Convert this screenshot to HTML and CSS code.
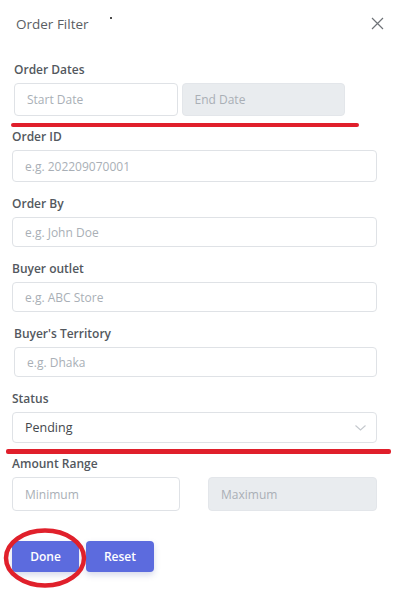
FILE: index.html
```html
<!DOCTYPE html>
<html lang="en">
<head>
<meta charset="utf-8">
<title>Order Filter</title>
<link rel="stylesheet" href="styles.css">
</head>
<body>
<div class="panel">
  <header class="head">
    <h1 class="title">Order Filter</h1>
    <span class="dot"></span>
    <button class="close" aria-label="Close">
      <svg width="13" height="13" viewBox="0 0 13 13"><path d="M1 1L12 12M12 1L1 12" stroke="#6f7378" stroke-width="1.2" fill="none"/></svg>
    </button>
  </header>

  <div class="field indent">
    <label class="label">Order Dates</label>
    <div class="pair pair-dates">
      <div class="input h33"><span class="ph">Start Date</span></div>
      <div class="input h33 disabled"><span class="ph">End Date</span></div>
    </div>
  </div>
  <div class="redline redline-a"></div>

  <div class="field">
    <label class="label">Order ID</label>
    <div class="input h32"><span class="ph">e.g. 202209070001</span></div>
  </div>

  <div class="field">
    <label class="label">Order By</label>
    <div class="input"><span class="ph">e.g. John Doe</span></div>
  </div>

  <div class="field">
    <label class="label">Buyer outlet</label>
    <div class="input"><span class="ph">e.g. ABC Store</span></div>
  </div>

  <div class="field indent">
    <label class="label">Buyer's Territory</label>
    <div class="input"><span class="ph">e.g. Dhaka</span></div>
  </div>

  <div class="field last">
    <label class="label">Status</label>
    <div class="input h31 select">
      <span class="val">Pending</span>
      <svg width="11" height="6" viewBox="0 0 11 6"><path d="M0.5 0.5L5.5 5L10.5 0.5" stroke="#c4c8cd" stroke-width="1.1" fill="none"/></svg>
    </div>
  </div>
  <div class="redline redline-b"></div>

  <div class="field">
    <label class="label">Amount Range</label>
    <div class="pair pair-amount">
      <div class="input h34"><span class="ph">Minimum</span></div>
      <div class="input h34 disabled"><span class="ph">Maximum</span></div>
    </div>
  </div>

  <div class="actions">
    <button class="btn btn-done">Done</button>
    <button class="btn btn-reset">Reset</button>
    <svg class="ring" width="86" height="62" viewBox="0 0 86 62"><ellipse cx="43" cy="31" rx="39" ry="27.5" fill="none" stroke="#e0202b" stroke-width="4.5"/></svg>
  </div>
</div>
</body>
</html>
```

FILE: styles.css
```css
* { box-sizing: border-box; }
html, body { margin: 0; padding: 0; background: #fff; }
body {
  font-family: "Open Sans", "Noto Sans", "Liberation Sans", sans-serif;
  color: #3b3f44;
}
.panel {
  width: 402px;
  min-height: 604px;
  padding: 0 25px 0 12px;
}
.head {
  position: relative;
  display: flex;
  align-items: center;
  height: 45px;
  padding-left: 4px;
  padding-top: 2px;
}
.title {
  margin: 0;
  font-size: 13.5px;
  font-weight: 400;
  color: #5a5e63;
  line-height: 20px;
}
.dot {
  position: absolute;
  left: 98px;
  top: 17px;
  width: 2px;
  height: 2px;
  background: #111;
  border-radius: 1px;
}
.close {
  margin-left: auto;
  margin-right: -7px;
  padding: 0;
  border: 0;
  background: none;
  display: flex;
  width: 13px;
  height: 13px;
}
.field { margin-bottom: 14px; }
.field.indent { padding-left: 2px; }
.field.last { margin-bottom: 0; }
.head + .field { margin-top: 17px; margin-bottom: 0; }
.label {
  display: block;
  font-size: 12px;
  font-weight: 600;
  line-height: 16px;
  color: #53585e;
  margin-bottom: 5px;
}
.input {
  height: 30px;
  border: 1px solid #dfe2e6;
  border-radius: 4px;
  background: #fff;
  display: flex;
  align-items: center;
  padding: 0 12px;
  font-size: 12px;
}
.h31 { height: 31px; }
.h32 { height: 32px; }
.h33 { height: 33px; }
.h34 { height: 34px; }
.input.disabled { background: #e9ecef; border-color: #e3e6ea; }
.ph { color: #a9afb6; }
.select { justify-content: space-between; padding-right: 10px; }
.val { color: #43474c; font-size: 12.5px; }
.pair { display: flex; }
.pair-dates { gap: 4px; width: 331px; }
.pair-dates .input { flex: 1; }
.pair-amount { justify-content: space-between; }
.pair-amount .input { width: 168px; }
.pair-amount .input.disabled { width: 169px; }
.redline {
  height: 4px;
  background: #e01f2b;
  border-radius: 2px;
}
.redline-a {
  width: 348px;
  margin: 7px 0 2px -1px;
}
.redline-b {
  width: 385px;
  margin: 6px 0 2px -6px;
  height: 5px;
}
.actions {
  position: relative;
  display: flex;
  gap: 7px;
  margin-top: 30px;
}
.btn {
  height: 31px;
  width: 67px;
  border: 0;
  border-radius: 4px;
  background: #5c6bde;
  color: #fff;
  font-family: "Open Sans", "Noto Sans", sans-serif;
  font-size: 12px;
  font-weight: 600;
  box-shadow: 0 3px 6px rgba(70, 80, 160, 0.22);
  padding: 0;
}
.btn-reset { width: 68px; }
.ring {
  position: absolute;
  left: -10px;
  top: -14px;
  z-index: 2;
  pointer-events: none;
}
```
